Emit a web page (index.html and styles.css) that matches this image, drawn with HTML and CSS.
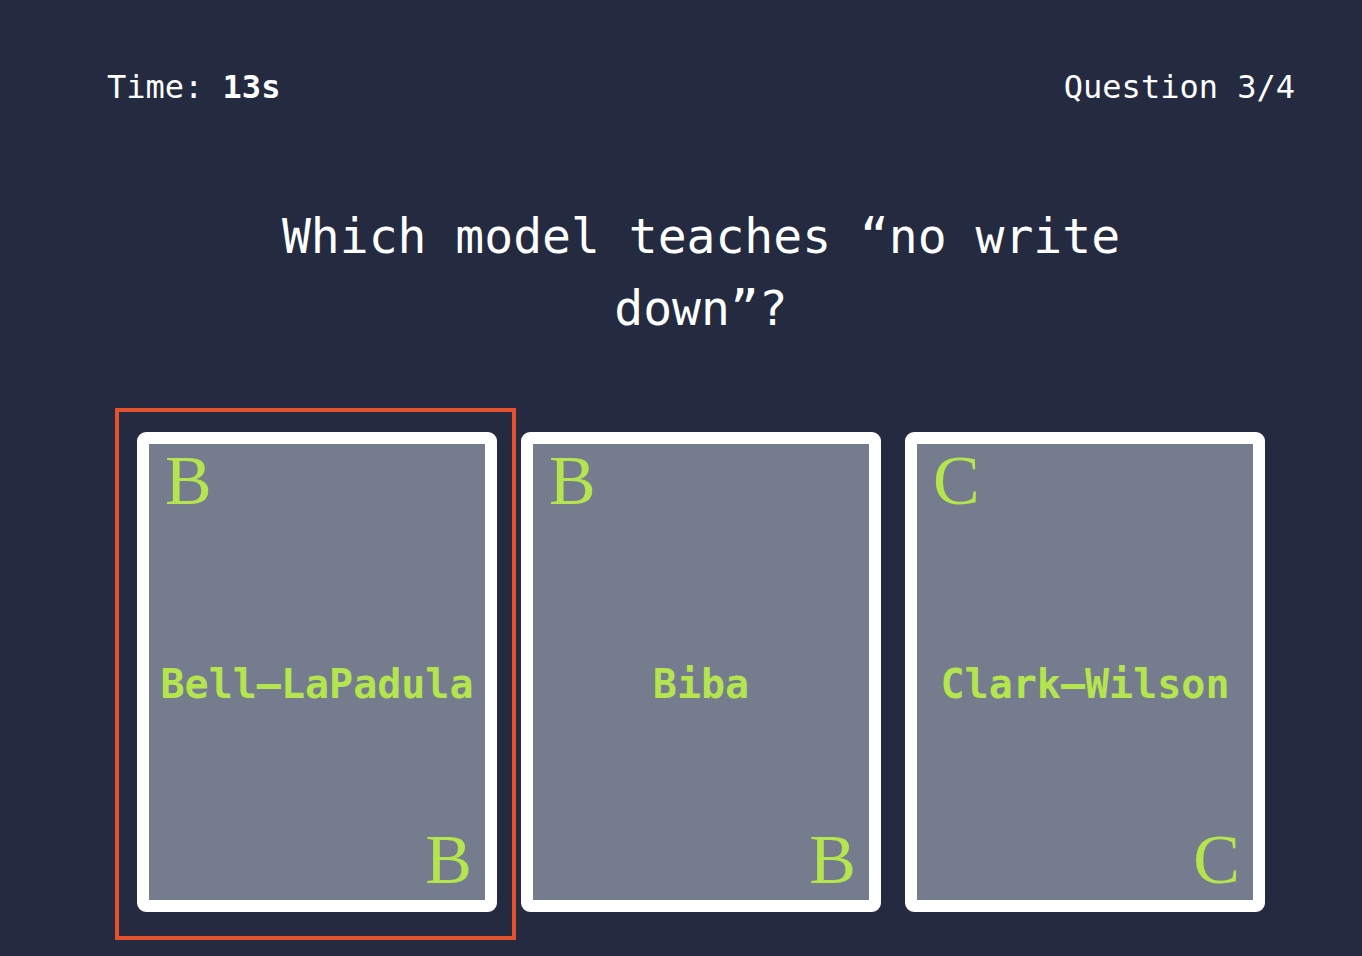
FILE: index.html
```html
<!DOCTYPE html>
<html lang="en">
<head>
<meta charset="utf-8">
<title>Quiz</title>
<link rel="stylesheet" href="styles.css">
</head>
<body>
<main class="page">
  <header class="status">
    <div class="timer">Time: <strong>13s</strong></div>
    <div class="progress">Question 3/4</div>
  </header>
  <h1 class="question">Which model teaches “no write down”?</h1>
  <section class="cards">
    <div class="card selected">
      <span class="corner top">B</span>
      <span class="label">Bell–LaPadula</span>
      <span class="corner bottom">B</span>
      <div class="focus-ring"></div>
    </div>
    <div class="card">
      <span class="corner top">B</span>
      <span class="label">Biba</span>
      <span class="corner bottom">B</span>
    </div>
    <div class="card">
      <span class="corner top">C</span>
      <span class="label">Clark–Wilson</span>
      <span class="corner bottom">C</span>
    </div>
  </section>
</main>
</body>
</html>
```

FILE: styles.css
```css
html, body {
  margin: 0;
  padding: 0;
  background: #242b41;
  height: 100%;
}

body {
  font-family: "DejaVu Sans Mono", "Liberation Mono", monospace;
  color: #ffffff;
}

.page {
  margin-left: 40px;
  padding: 68px 67px 0 67px;
}

.status {
  display: flex;
  justify-content: space-between;
  font-size: 32px;
  line-height: normal;
}

.timer strong {
  font-weight: bold;
}

.question {
  max-width: 880px;
  margin: 94px auto 0;
  font-size: 48px;
  line-height: 72px;
  font-weight: normal;
  text-align: center;
}

.cards {
  display: flex;
  justify-content: center;
  gap: 24px;
  margin-top: 88px;
}

.card {
  position: relative;
  box-sizing: border-box;
  width: 360px;
  height: 480px;
  border: 12px solid #ffffff;
  border-radius: 9px;
  background: #747c8e;
  display: flex;
  flex-direction: column;
  padding: 2px 13px 5px 16px;
  color: #b4e54f;
}

.corner {
  font-family: "Liberation Serif", "DejaVu Serif", serif;
  font-size: 70px;
  line-height: 1;
  display: block;
}

.corner.bottom {
  align-self: flex-end;
}

.label {
  flex: 1;
  display: flex;
  align-items: center;
  justify-content: center;
  padding-top: 26px;
  padding-right: 3px;
  font-size: 40px;
  font-weight: bold;
  white-space: nowrap;
}

.focus-ring {
  position: absolute;
  left: -34px;
  top: -36px;
  width: 401px;
  height: 532px;
  box-sizing: border-box;
  border: 4px solid #e5512d;
  pointer-events: none;
}
```
